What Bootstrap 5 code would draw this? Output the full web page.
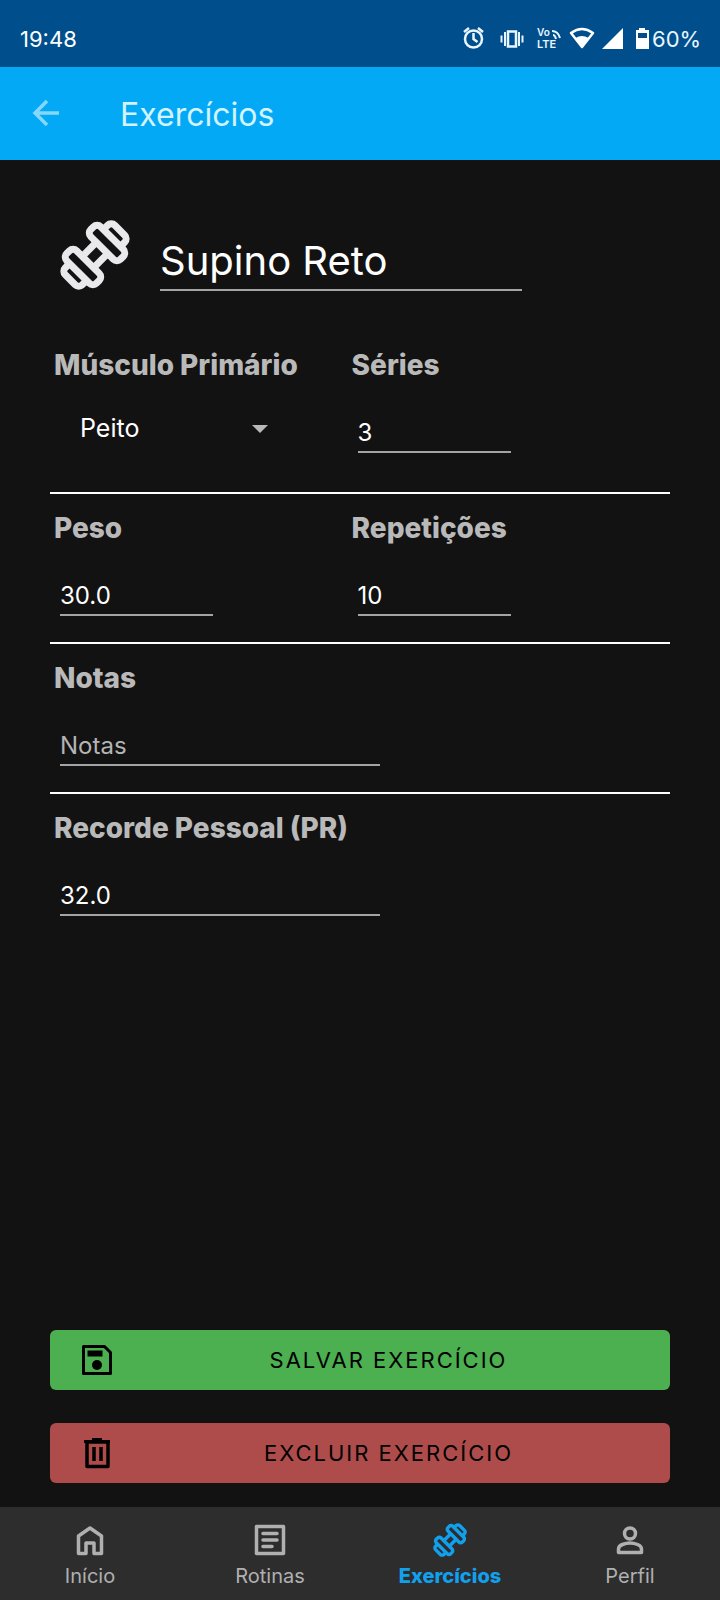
<!DOCTYPE html>
<html lang="pt-BR" data-bs-theme="dark">
<head>
<meta charset="utf-8">
<meta name="viewport" content="width=device-width, initial-scale=1">
<title>Exercícios</title>
<link rel="stylesheet" href="https://cdn.jsdelivr.net/npm/bootstrap@5.3.0/dist/css/bootstrap.min.css">
<style>
  body { background: #121212; color: #fff; font-family: Inter, "Open Sans", sans-serif; font-size: 24px; line-height: 36px; }
  .status-bar { background: #004f8c; height: 67px; padding: 11px 20px 0; font-size: 22px; line-height: 56px; }
  .app-bar { background: #04a9f6; height: 93px; padding: 0 30px; }
  .app-bar a { color: #85d8fb; line-height: 0; }
  .app-bar h1 { color: #d2f3ff; font-size: 32px; line-height: 40px; margin-left: 60px; padding-top: 2px; font-weight: 400; }
  .page-body { padding: 0 50px 24px; }
  .title-row { height: 171px; padding: 60px 0 0 10px; gap: 30px; }
  .line-input { background: transparent; border: 0; border-bottom: 2px solid #a4a4a4; border-radius: 0; color: #fff;
    font-size: 24px; height: 46px; padding: 6px 0 0; margin-left: 10px; max-width: 320px; }
  .line-input:focus { background: transparent; color: #fff; border-color: #04a9f6; box-shadow: none; }
  .line-input::placeholder { color: #b4b4b4; opacity: 1; }
  .line-input.short-field { max-width: 153px; }
  .line-input.name-field { font-size: 40px; height: 60px; margin: 11px 0 0; max-width: 362px; padding: 2px 0 0; }
  .field-row { border-bottom: 2px solid #fff; padding: 16px 0 26px; }
  .field-row.tall { padding-bottom: 39px; }
  .field-row.last { border: 0; }
  .first-col { width: 48%; }
  .field-label { color: #b9b9b9; font-size: 28px; font-weight: 800; line-height: 36px; margin: 0 0 24px 4px; white-space: nowrap; }
  .muscle-select { background-color: transparent; border: 0; color: #fff; font-size: 25px; height: 44px; width: 232px; padding: 0 40px 0 30px;
    background-image: url("data:image/svg+xml,%3Csvg xmlns='http://www.w3.org/2000/svg' viewBox='0 0 16 8'%3E%3Cpath d='M0 0h16L8 8z' fill='%23b9b9b9'/%3E%3C/svg%3E");
    background-size: 16px 8px; background-position: right 14px center; }
  .action-btn { height: 60px; border: 0; border-radius: 6px; padding: 0 10px 0 27px; font-size: 22px; letter-spacing: 2px; color: #000; }
  .save-btn, .save-btn:hover { background: #4caf50; color: #000; }
  .delete-btn, .delete-btn:hover { background: #ae4c4b; color: #000; }
  .actions { gap: 33px; }
  .tab-bar { background: #2d2d2d; height: 93px; }
  .tab-bar a { color: #b0b0b0; font-size: 20px; line-height: 26px; padding-top: 13px; gap: 3px; }
  .tab-bar a svg { width: 40px; height: 40px; }
  .tab-bar a.active { color: #129fec; font-weight: 800; }
</style>
</head>
<body>
<svg class="d-none" xmlns="http://www.w3.org/2000/svg">
  <symbol id="dumbbell" viewBox="0 0 70 70">
    <g transform="translate(35 35) rotate(-45)" fill="none" stroke="currentColor" stroke-width="7">
      <path d="M-11-8H11M-11 8H11"/>
      <rect x="10" y="-21" width="14" height="42" rx="5"/>
      <rect x="-24" y="-21" width="14" height="42" rx="5"/>
      <path d="M24-12h6a5 5 0 0 1 5 5v14a5 5 0 0 1-5 5h-6M-24-12h-6a5 5 0 0 0-5 5v14a5 5 0 0 0 5 5h6"/>
    </g>
  </symbol>
</svg>
<div class="d-flex flex-column min-vh-100">
  <div class="status-bar d-flex justify-content-between">
    <span>19:48</span>
    <div class="d-flex align-items-center">
      <svg width="240" height="56" viewBox="460 11 240 56" role="img" aria-label="Alarme, vibrar, VoLTE, Wi-Fi, sinal, bateria 60%">
        <g fill="none" stroke="#e8f6ff" stroke-width="2">
          <circle cx="473.500" cy="39" r="8.500" stroke-width="2.500"/>
          <path d="M473.500 33v6l4 3M464 32l5-4M483 32l-5-4" stroke-width="2.500"/>
          <rect x="508" y="31.500" width="8" height="15" stroke-width="2.500"/>
          <path d="M505 32v14M501.500 35.500v7M519 32v14M522.500 35.500v7"/>
          <path d="M553 35q2 0 3 4M552 31q6 0 8 7"/>
        </g>
        <g fill="#e8f6ff" font-family="Inter, sans-serif" font-weight="600">
          <text x="537" y="36" font-size="10">Vo</text>
          <text x="537" y="48" font-size="11">LTE</text>
          <text x="652" y="47" font-size="22" font-weight="400">60%</text>
        </g>
        <path d="M571 33q11-8 22 0l-11 14z" fill="none" stroke="#fff" stroke-width="2.500" stroke-linejoin="round"/>
        <path d="M575.500 38q6.500-4 13 0L582 47z" fill="#fff"/>
        <path d="M623 28v21h-21z" fill="#fff"/>
        <path d="M636 30h3v-2h6v2h4v19h-13zM638 33v5h9v-5z" fill="#fff" fill-rule="evenodd"/>
      </svg>
    </div>
  </div>

  <header class="app-bar d-flex align-items-center">
    <a href="#" aria-label="Voltar">
      <svg width="30" height="30" viewBox="0 1 30 30" fill="none" stroke="currentColor" stroke-width="3.500"><path d="M29 15H5M17 3L5 15l12 12"/></svg>
    </a>
    <h1 class="mb-0">Exercícios</h1>
  </header>

  <form class="page-body d-flex flex-column flex-grow-1">
    <div class="title-row d-flex align-items-start">
      <svg class="flex-shrink-0" width="70" height="70" color="#e9e9ec" aria-hidden="true"><use href="#dumbbell"/></svg>
      <input class="form-control line-input name-field" type="text" value="Supino Reto" aria-label="Nome do exercício">
    </div>

    <div class="field-row tall row gx-0">
      <div class="col-auto first-col">
        <label class="field-label d-block" for="muscle">Músculo Primário</label>
        <select class="form-select muscle-select" id="muscle"><option>Peito</option><option>Costas</option><option>Pernas</option></select>
      </div>
      <div class="col">
        <label class="field-label d-block" for="sets">Séries</label>
        <input class="form-control line-input short-field" id="sets" type="text" inputmode="numeric" value="3">
      </div>
    </div>
    <div class="field-row row gx-0">
      <div class="col-auto first-col">
        <label class="field-label d-block" for="weight">Peso</label>
        <input class="form-control line-input short-field" id="weight" type="text" inputmode="decimal" value="30.0">
      </div>
      <div class="col">
        <label class="field-label d-block" for="reps">Repetições</label>
        <input class="form-control line-input short-field" id="reps" type="text" inputmode="numeric" value="10">
      </div>
    </div>
    <div class="field-row">
      <label class="field-label d-block" for="notes">Notas</label>
      <input class="form-control line-input" id="notes" type="text" placeholder="Notas">
    </div>
    <div class="field-row last">
      <label class="field-label d-block" for="record">Recorde Pessoal (PR)</label>
      <input class="form-control line-input" id="record" type="text" inputmode="decimal" value="32.0">
    </div>

    <div class="actions d-flex flex-column mt-auto">
      <button type="button" class="btn action-btn save-btn d-flex align-items-center">
        <svg width="40" height="40" viewBox="0 0 40 40" fill="none" stroke="currentColor" stroke-width="3" stroke-linejoin="round"><path d="M6.500 6.500h21l6 6v21h-27z"/><path d="M10.500 10.500h15v6h-15z" fill="currentColor" stroke="none"/><circle cx="20" cy="25" r="5" fill="currentColor" stroke="none"/></svg>
        <span class="flex-grow-1">SALVAR EXERCÍCIO</span>
      </button>
      <button type="button" class="btn action-btn delete-btn d-flex align-items-center">
        <svg width="40" height="40" viewBox="0 0 40 40" fill="none" stroke="currentColor" stroke-width="3" stroke-linejoin="round"><path d="M7 8.500h26M15 6.500h10"/><path d="M10 9h21v24.500H10zM17 14v14M24 14v14" stroke-width="3.500"/></svg>
        <span class="flex-grow-1">EXCLUIR EXERCÍCIO</span>
      </button>
    </div>
  </form>

  <nav class="tab-bar nav nav-fill flex-nowrap" aria-label="Principal">
    <a href="#" class="col-3 d-flex flex-column align-items-center text-decoration-none">
      <svg viewBox="0 0 40 40" fill="none" stroke="currentColor" stroke-width="3.500" stroke-linejoin="round"><path d="M8.500 33.500V16L20 8l11.500 8v17.500H24V23h-8v10.500z"/></svg>
      <span>Início</span>
    </a>
    <a href="#" class="col-3 d-flex flex-column align-items-center text-decoration-none">
      <svg viewBox="0 0 40 40" fill="none" stroke="currentColor" stroke-width="3.500" stroke-linejoin="round" stroke-linecap="round"><path d="M6.500 6.500h27v27h-27zM13 13.500h14M13 20h14M13 26.500h9"/></svg>
      <span>Rotinas</span>
    </a>
    <a href="#" class="active col-3 d-flex flex-column align-items-center text-decoration-none" aria-current="page">
      <svg viewBox="0 0 40 40"><use href="#dumbbell" x="3" y="3" width="34" height="34"/></svg>
      <span>Exercícios</span>
    </a>
    <a href="#" class="col-3 d-flex flex-column align-items-center text-decoration-none">
      <svg viewBox="0 0 40 40" fill="none" stroke="currentColor" stroke-width="3.500" stroke-linejoin="round"><circle cx="20" cy="13.500" r="5.500"/><path d="M8.500 32.500V29q0-3 4-4.500 7.500-3 15 0 4 1.500 4 4.500v3.500z"/></svg>
      <span>Perfil</span>
    </a>
  </nav>
</div>
<script src="https://cdn.jsdelivr.net/npm/bootstrap@5.3.0/dist/js/bootstrap.bundle.min.js"></script>
</body>
</html>
